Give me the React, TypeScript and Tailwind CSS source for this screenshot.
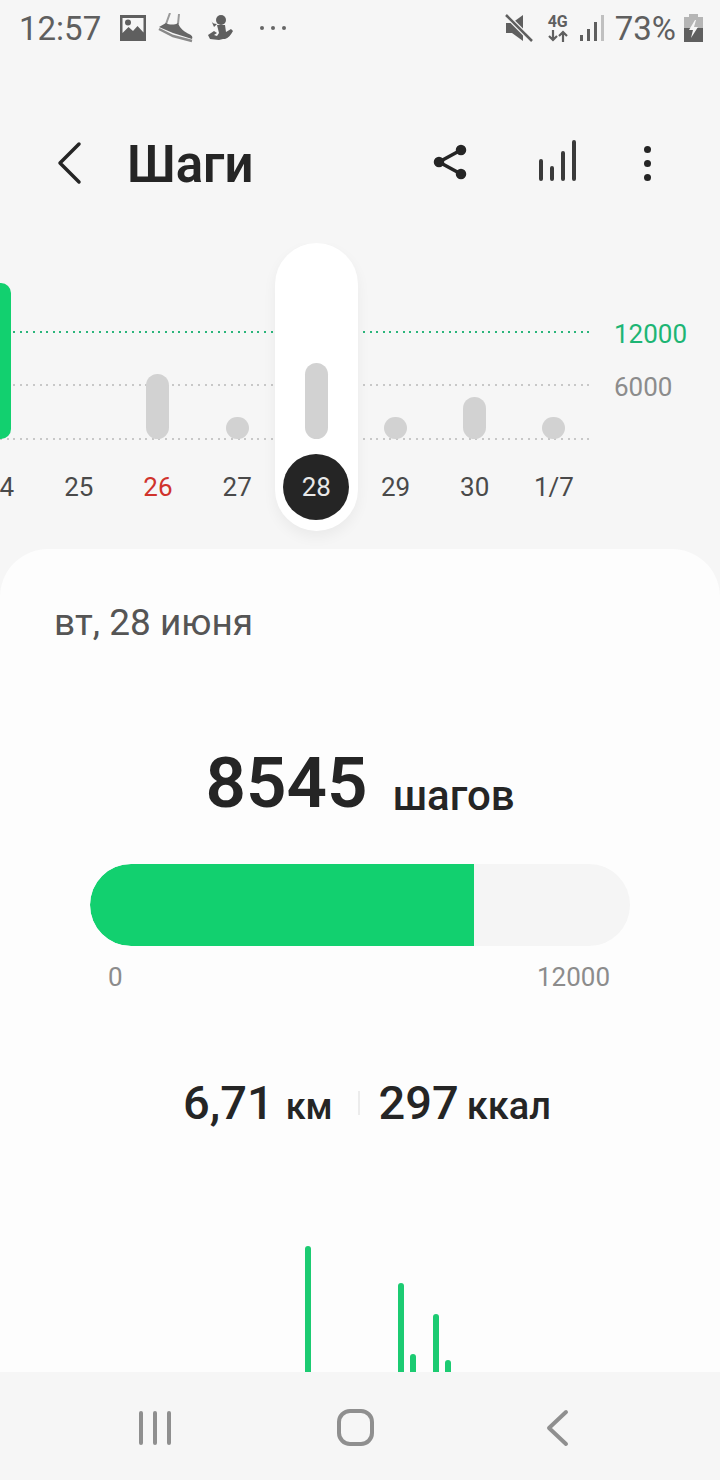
const days = [
  { label: "24", height: 156, green: true },
  { label: "25", height: 0 },
  { label: "26", height: 65, red: true },
  { label: "27", height: 22 },
  { label: "28", height: 76, active: true },
  { label: "29", height: 22 },
  { label: "30", height: 42 },
  { label: "1/7", height: 22 },
];

function StatusLeft() {
  return (
    <div className="flex items-center">
      <span className="w-[100px] pl-[19px] text-[33px] leading-none text-[#5f5f5f]">12:57</span>
      <svg className="ml-[19px]" width="28" height="26" viewBox="0 0 28 26" fill="#5f5f5f">
        <path fillRule="evenodd" d="M1 0h26v26H1zM3.500 3v15l6-6 4.500 4 4.500-5 6 6.500V3z" />
        <circle cx="9" cy="7.500" r="3" />
      </svg>
      <svg className="ml-[11px]" width="36" height="30" viewBox="0 0 36 30" fill="none">
        <path d="M12 0L8 11M21 1l-1 10" stroke="#9a9a9a" strokeWidth="2" />
        <path d="M8 10c3 2 9 2 12 0 2 6 7 9 11 11 3 1 4 3 3 5L15 20 1 14z" fill="#666" />
        <path d="M1 16l14 7 19 5" stroke="#8a8a8a" strokeWidth="2.500" />
      </svg>
      <svg className="ml-[12px]" width="28" height="28" viewBox="0 0 28 28" fill="#5f5f5f">
        <circle cx="15" cy="6" r="5" />
        <path d="M5 6c1 3 3 4 6 4l-3 3z" />
        <path d="M11 11h8l1 7 5-3 2 2c-2 4-5 7-8 8h-2l-4 1-9-1-2-4 6-4 3 2-3 2 3 1 2-3z" />
      </svg>
      <div className="ml-[26px] flex gap-[7px]">
        <span className="h-[4px] w-[4px] rounded-full bg-[#666]" />
        <span className="h-[4px] w-[4px] rounded-full bg-[#666]" />
        <span className="h-[4px] w-[4px] rounded-full bg-[#666]" />
      </div>
    </div>
  );
}

function StatusRight() {
  return (
    <div className="flex items-center pr-[17px]">
      <svg className="mr-[3px]" width="28" height="28" viewBox="0 0 28 28" fill="#5f5f5f">
        <path d="M1 9h6l11-8v26L7 19H1z" />
        <path d="M1 1l26 26" stroke="#f6f6f6" strokeWidth="5" />
        <path d="M1 1l26 26" stroke="#5f5f5f" strokeWidth="2.500" />
      </svg>
      <div className="ml-[11px] flex w-[22px] flex-col items-center">
        <span className="text-[16px] font-bold leading-[16px] text-[#5f5f5f]">4G</span>
        <svg width="20" height="12" viewBox="0 0 20 12" fill="none" stroke="#5f5f5f" strokeWidth="2.200">
          <path d="M5 0v10M1 6l4 4 4-4M15 12V2M11 6l4-4 4 4" />
        </svg>
      </div>
      <div className="ml-[11px] flex h-[26px] items-end gap-[4px]">
        <span className="h-[6px] w-[3px] bg-[#5f5f5f]" />
        <span className="h-[12px] w-[3px] bg-[#5f5f5f]" />
        <span className="h-[19px] w-[3px] bg-[#5f5f5f]" />
        <span className="h-[26px] w-[3px] bg-[#c0c0c0]" />
      </div>
      <span className="ml-[11px] text-[33px] leading-none text-[#5f5f5f]">73%</span>
      <svg className="ml-[8px]" width="19" height="28" viewBox="0 0 19 28">
        <path d="M5 0h9v3h5v11H0V3h5z" fill="#b5b5b5" />
        <path d="M0 14h19v14H0z" fill="#5f5f5f" />
        <path d="M11 6l-6 10h4l-2 8 7-11h-4l2-7z" fill="#f6f6f6" />
      </svg>
    </div>
  );
}

function Header() {
  return (
    <div className="flex h-[187px] items-start text-[#252525]">
      <svg className="ml-[56px] mt-[85px]" width="26" height="44" viewBox="0 0 26 44" fill="none" stroke="#252525" strokeWidth="3.500" strokeLinecap="round" strokeLinejoin="round">
        <path d="M23 3L4 22l19 19" />
      </svg>
      <h1 className="ml-[45px] mt-[81px] text-[51px] font-semibold leading-[56px]">Шаги</h1>
      <svg className="ml-[180px] mt-[87px]" width="36" height="38" viewBox="0 0 36 38" fill="#252525" stroke="#252525" strokeWidth="3.500">
        <path d="M28 7L6 19l22 12" fill="none" />
        <circle cx="28" cy="7" r="3.500" />
        <circle cx="6" cy="19" r="3.500" />
        <circle cx="28" cy="31" r="3.500" />
      </svg>
      <svg className="ml-[69px] mt-[84px]" width="40" height="42" viewBox="0 0 40 42" fill="none" stroke="#3a3a3a" strokeWidth="4" strokeLinecap="round">
        <path d="M3 21v18M14 28v11M25 13v26M36 2v37" />
      </svg>
      <div className="ml-[66px] mt-[90px] flex flex-col gap-[7px]">
        <span className="h-[7px] w-[7px] rounded-full bg-[#252525]" />
        <span className="h-[7px] w-[7px] rounded-full bg-[#252525]" />
        <span className="h-[7px] w-[7px] rounded-full bg-[#252525]" />
      </div>
    </div>
  );
}

function DayColumn({ day }: { day: (typeof days)[number] }) {
  return (
    <div className="flex w-[79.2px] shrink-0 flex-col items-center">
      <div className="flex h-[196px] items-end">
        {day.height > 0 && (
          <div
            className={day.green ? "w-[23px] rounded-[10px] bg-[#12d06f]" : "w-[23px] rounded-full bg-[#d2d2d2]"}
            style={{ height: day.height }}
          />
        )}
      </div>
      <div
        className={
          day.active
            ? "mt-[15px] flex h-[66px] w-[66px] items-center justify-center rounded-full bg-[#252525] text-[#e8e8e8]"
            : day.red
              ? "mt-[15px] flex h-[66px] items-center text-[#d0332c]"
              : "mt-[15px] flex h-[66px] items-center text-[#4a4a4a]"
        }
      >
        {day.label}
      </div>
    </div>
  );
}

function WeekChart() {
  return (
    <div className="relative h-[306px] overflow-hidden">
      {/* dotted goal lines */}
      <div className="absolute left-0 top-[88px] h-[2px] w-[590px] bg-[repeating-linear-gradient(90deg,#2bb57b_0_2px,transparent_2px_6.6px)]" />
      <div className="absolute left-0 top-[141px] h-[2px] w-[590px] bg-[repeating-linear-gradient(90deg,#c8c8c8_0_2px,transparent_2px_6.6px)]" />
      <div className="absolute left-0 top-[195px] h-[2px] w-[590px] bg-[repeating-linear-gradient(90deg,#c8c8c8_0_2px,transparent_2px_6.6px)]" />
      <div className="absolute left-[614px] top-[75px] text-[26px] leading-[32px] text-[#1db574]">12000</div>
      <div className="absolute left-[614px] top-[128px] text-[26px] leading-[32px] text-[#8c8c8c]">6000</div>
      {/* selected day highlight */}
      <div className="absolute left-[275px] top-0 h-[288px] w-[83px] rounded-full bg-white shadow-[0_6px_14px_rgba(0,0,0,0.05)]" />
      <div className="relative ml-[-40px] flex text-[26px] leading-none">
        {days.map((day) => (
          <DayColumn key={day.label} day={day} />
        ))}
      </div>
    </div>
  );
}

function ActivityBars() {
  return (
    <div className="ml-[305px] mt-[115px] flex h-[126px] items-end">
      <div className="h-[126px] w-[6px] rounded-t-full bg-[#1ccb72]" />
      <div className="ml-[87px] h-[89px] w-[6px] rounded-t-full bg-[#1ccb72]" />
      <div className="ml-[6px] h-[18px] w-[6px] rounded-t-full bg-[#1ccb72]" />
      <div className="ml-[17px] h-[58px] w-[6px] rounded-t-full bg-[#1ccb72]" />
      <div className="ml-[6px] h-[12px] w-[6px] rounded-t-full bg-[#1ccb72]" />
    </div>
  );
}

function DaySummary() {
  return (
    <div className="min-h-0 flex-1 overflow-hidden rounded-t-[48px] bg-[#fdfdfd] text-[#252525]">
      <div className="pl-[54px] pt-[53px] text-[37px] leading-[42px] text-[#555]">вт, 28 июня</div>
      <div className="mt-[97px] flex h-[84px] items-start justify-center">
        <span className="text-[71px] font-semibold leading-[84px]">8545</span>
        <span className="ml-[25px] mt-[33px] text-[42px] font-medium leading-[44px]">шагов</span>
      </div>
      <div className="mx-[90px] mt-[39px] h-[82px] overflow-hidden rounded-full bg-[#f5f5f5]">
        <div className="h-full w-[384px] rounded-l-full bg-[#12d06f]" />
      </div>
      <div className="mt-[15px] flex justify-between pl-[108px] pr-[110px] text-[26px] leading-[32px] text-[#8c8c8c]">
        <span>0</span>
        <span>12000</span>
      </div>
      <div className="mt-[82px] flex items-center pl-[183px]">
        <div className="flex items-baseline">
          <span className="text-[47px] font-medium leading-[56px]">6,71</span>
          <span className="ml-[12px] text-[36px] font-medium leading-[40px]">км</span>
        </div>
        <div className="ml-[25px] h-[24px] w-[2px] bg-[#ececec]" />
        <div className="ml-[19px] flex items-baseline">
          <span className="text-[47px] font-medium leading-[56px]">297</span>
          <span className="ml-[8px] text-[38px] font-medium leading-[40px]">ккал</span>
        </div>
      </div>
      <ActivityBars />
    </div>
  );
}

function NavBar() {
  return (
    <div className="flex h-[108px] shrink-0 items-start bg-[#f6f6f6]">
      <div className="ml-[139px] mt-[39px] flex gap-[10px]">
        <span className="h-[34px] w-[4px] rounded-full bg-[#8f8f8f]" />
        <span className="h-[34px] w-[4px] rounded-full bg-[#8f8f8f]" />
        <span className="h-[34px] w-[4px] rounded-full bg-[#8f8f8f]" />
      </div>
      <div className="ml-[166px] mt-[37px] h-[37px] w-[37px] rounded-[13px] border-[4px] border-[#8f8f8f]" />
      <svg className="ml-[172px] mt-[37px]" width="24" height="38" viewBox="0 0 24 38" fill="none" stroke="#8f8f8f" strokeWidth="4" strokeLinecap="round" strokeLinejoin="round">
        <path d="M20 3L3 19l17 16" />
      </svg>
    </div>
  );
}

export default function App() {
  return (
    <div className="flex h-[1480px] w-[720px] flex-col overflow-hidden bg-[#f6f6f6] font-['Roboto',sans-serif]">
      <div className="flex h-[56px] shrink-0 items-center justify-between">
        <StatusLeft />
        <StatusRight />
      </div>
      <Header />
      <WeekChart />
      <DaySummary />
      <NavBar />
    </div>
  );
}
